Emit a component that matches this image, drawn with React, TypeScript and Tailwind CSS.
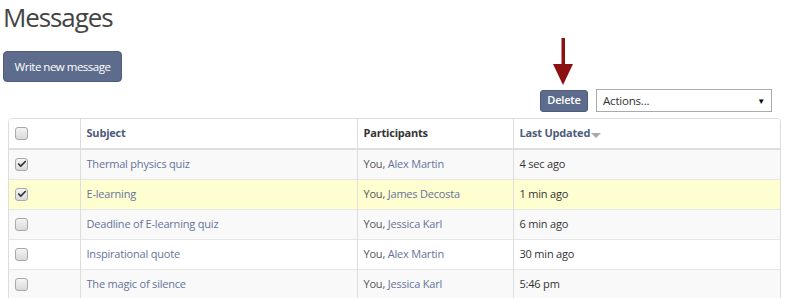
import { Check } from "lucide-react";

interface MessageRow {
  id: number;
  subject: string;
  participant: string;
  updated: string;
  checked: boolean;
  highlight?: boolean;
}

const rows: MessageRow[] = [
  { id: 1, subject: "Thermal physics quiz", participant: "Alex Martin", updated: "4 sec ago", checked: true },
  { id: 2, subject: "E-learning", participant: "James Decosta", updated: "1 min ago", checked: true, highlight: true },
  { id: 3, subject: "Deadline of E-learning quiz", participant: "Jessica Karl", updated: "6 min ago", checked: false },
  { id: 4, subject: "Inspirational quote", participant: "Alex Martin", updated: "30 min ago", checked: false },
  { id: 5, subject: "The magic of silence", participant: "Jessica Karl", updated: "5:46 pm", checked: false },
];

function Box({ checked }: { checked: boolean }) {
  return (
    <span className="inline-flex size-[13px] items-center justify-center rounded-[3px] border border-[#a9a9a9] bg-gradient-to-b from-[#f4f4f4] to-[#d9d9d9]">
      {checked && <Check className="size-[10px] text-[#333]" strokeWidth={4} aria-hidden />}
    </span>
  );
}

export default function App() {
  return (
    <div className="relative h-[298px] w-[785px] overflow-hidden bg-white font-['Open_Sans',sans-serif] text-[#333]">
      <h1 className="pl-[3px] pt-[1px] text-[26px] leading-[32px] font-normal tracking-[-1.1px] text-[#444]">Messages</h1>

      <button className="ml-[3px] mt-[18px] block h-[31px] w-[119px] rounded-[4px] border border-[#4f5d7a] bg-[#5d6c8c] text-[11.5px] tracking-[-0.5px] text-white">
        Write new message
      </button>

      <div className="mt-[7px] flex h-[23px] items-center justify-end gap-[8px] pr-[13px]">
        <button className="h-[22px] w-[48px] rounded-[3px] border border-[#4f5d7a] bg-[#5d6c8c] text-[11px] font-semibold tracking-[-0.2px] text-white">
          Delete
        </button>
        <div className="flex h-[23px] w-[176px] items-center justify-between border border-[#aaa] bg-white pl-[6px] pr-[6px] text-[11.5px] tracking-[-0.2px] text-[#333]">
          <span>Actions...</span>
          <span className="text-[8px] text-black">▼</span>
        </div>
      </div>

      <div className="ml-[8px] mt-[6px] w-[773px] overflow-hidden rounded-[4px] border border-[#ddd]">
        <table className="w-full table-fixed border-collapse text-[11px] tracking-[-0.2px]">
          <colgroup>
            <col className="w-[71px]" />
            <col className="w-[277px]" />
            <col className="w-[156px]" />
            <col />
          </colgroup>
          <thead>
            <tr className="h-[30px] border-b-2 border-[#ddd] bg-white">
              <th className="pl-[6px] text-left align-middle">
                <span className="flex">
                  <Box checked={false} />
                </span>
              </th>
              <th className="border-l border-[#ddd] pl-[6px] text-left font-bold text-[#4d5c7c]">Subject</th>
              <th className="border-l border-[#ddd] pl-[6px] text-left font-bold text-[#333]">Participants</th>
              <th className="border-l border-[#ddd] pl-[6px] text-left font-bold text-[#4d5c7c]">
                Last Updated
                <span className="ml-[1px] inline-block translate-y-[1px] border-x-[5px] border-t-[5px] border-x-transparent border-t-[#aaa] align-middle" />
              </th>
            </tr>
          </thead>
          <tbody>
            {rows.map((row, i) => (
              <tr
                key={row.id}
                className={`h-[30px] border-b border-[#e6e6e6] ${
                  row.highlight ? "bg-[#fefed0]" : i % 2 === 0 ? "bg-[#f9f9f9]" : "bg-white"
                }`}
              >
                <td className="pl-[6px] align-middle">
                  <span className="flex">
                    <Box checked={row.checked} />
                  </span>
                </td>
                <td className="border-l border-[#ddd] pl-[6px] text-[#65749a]">{row.subject}</td>
                <td className="border-l border-[#ddd] pl-[6px] text-[#555]">
                  You, <span className="text-[#65749a]">{row.participant}</span>
                </td>
                <td className="border-l border-[#ddd] pl-[6px] text-[#333]">{row.updated}</td>
              </tr>
            ))}
          </tbody>
        </table>
      </div>

      <svg className="absolute left-[552px] top-[38px]" width="22" height="48" viewBox="0 0 22 48" aria-hidden>
        <rect x="9.5" y="0" width="3.5" height="28" fill="#8b1010" />
        <polygon points="1,26 21,26 11,47" fill="#8b1010" />
      </svg>
    </div>
  );
}
